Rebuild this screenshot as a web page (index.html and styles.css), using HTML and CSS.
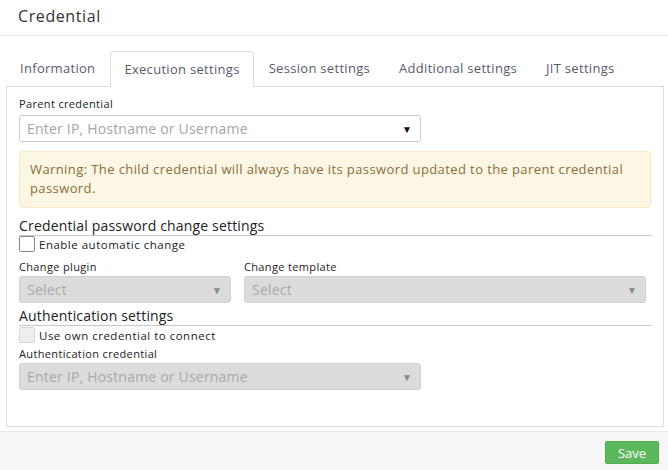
FILE: index.html
```html
<!DOCTYPE html>
<html>
<head>
<meta charset="utf-8">
<link rel="stylesheet" href="styles.css">
</head>
<body>
<div class="dialog">
  <div class="header"><h1 class="title">Credential</h1></div>
  <div class="main">
    <ul class="tabs">
      <li class="tab">Information</li>
      <li class="tab active">Execution settings</li>
      <li class="tab">Session settings</li>
      <li class="tab">Additional settings</li>
      <li class="tab">JIT settings</li>
    </ul>
    <div class="panel">
      <label class="label">Parent credential</label>
      <div class="select">
        <span class="placeholder">Enter IP, Hostname or Username</span>
        <span class="arrow">▼</span>
      </div>
      <div class="warning">Warning: The child credential will always have its password updated to the parent credential password.</div>

      <div class="section-title">Credential password change settings</div>
      <div class="check-row first"><span class="checkbox"></span><span class="check-label">Enable automatic change</span></div>
      <div class="cols">
        <div class="col">
          <label class="label">Change plugin</label>
          <div class="select disabled"><span class="placeholder">Select</span><span class="arrow">▼</span></div>
        </div>
        <div class="col">
          <label class="label">Change template</label>
          <div class="select disabled"><span class="placeholder">Select</span><span class="arrow">▼</span></div>
        </div>
      </div>

      <div class="section-title">Authentication settings</div>
      <div class="check-row"><span class="checkbox disabled"></span><span class="check-label">Use own credential to connect</span></div>
      <label class="label tight">Authentication credential</label>
      <div class="select disabled">
        <span class="placeholder">Enter IP, Hostname or Username</span>
        <span class="arrow">▼</span>
      </div>
    </div>
  </div>
  <div class="footer"><button class="save">Save</button></div>
</div>
</body>
</html>
```

FILE: styles.css
```css
* { box-sizing: border-box; }
html, body { margin: 0; padding: 0; background: #fff; }
body {
  font-family: "Open Sans", "Noto Sans", sans-serif;
  color: #333;
  width: 668px;
  height: 470px;
  overflow: hidden;
}
.dialog { display: flex; flex-direction: column; height: 470px; }
.header {
  height: 36px;
  border-bottom: 1px solid #e8e8e8;
  padding: 0 0 3px 18px;
  display: flex;
  align-items: center;
}
.title { margin: 0; font-size: 16px; font-weight: 500; color: #333; line-height: 1; letter-spacing: 0.6px; }
.main { flex: 1; padding: 14px 4px 0 6px; }
.tabs {
  list-style: none;
  margin: 0;
  padding: 0;
  display: flex;
  height: 36px;
}
.tab {
  padding: 0 13px;
  height: 36px;
  line-height: 35px;
  font-size: 13px;
  letter-spacing: 0.3px;
  color: #5b5a6b;
  border: 1px solid transparent;
  border-bottom: none;
  white-space: nowrap;
}
.tab + .tab { margin-left: 1px; }
.active {
  border-color: #dcdcdc;
  border-radius: 4px 4px 0 0;
  background: #fff;
  position: relative;
  top: 1px;
  height: 36px;
}
.panel {
  border: 1px solid #dcdcdc;
  height: 341px;
  padding: 9px 12px 0 12px;
}
.label {
  display: block;
  font-size: 11px;
  letter-spacing: 0.35px;
  color: #222;
  line-height: 15px;
  margin-bottom: 4px;
}
.select {
  width: 402px;
  height: 27px;
  flex-shrink: 0;
  border: 1px solid #ccc;
  border-radius: 3px;
  display: flex;
  align-items: center;
  justify-content: space-between;
  padding: 0 8px 0 7px;
  background: #fff;
}
.placeholder { font-size: 14px; letter-spacing: 0.2px; color: #a5a5a5; }
.arrow { font-size: 10px; color: #111; }
.select.disabled { background: #dcdcdc; border-color: #cfcfcf; }
.select.disabled .placeholder { color: #a9a9a9; }
.select.disabled .arrow { color: #888; }
.warning {
  margin-top: 9px;
  width: 632px;
  background: #fcf7e4;
  border: 1px solid #f8e8c4;
  border-radius: 4px;
  padding: 8px 10px 9px 10px;
  font-size: 13px;
  letter-spacing: 0.4px;
  line-height: 19px;
  color: #8a6d3b;
}
.section-title {
  margin-top: 9px;
  width: 633px;
  font-size: 14px;
  letter-spacing: 0.17px;
  line-height: 17px;
  color: #222;
  border-bottom: 1px solid #c8c8c8;
  padding-bottom: 1px;
}
.check-row { display: flex; align-items: center; height: 18px; margin-top: 0; }
.check-row.first { margin-top: -1px; }
.checkbox {
  width: 16px;
  height: 16px;
  border: 1px solid #888;
  border-radius: 2px;
  background: #fff;
  margin-right: 4px;
}
.checkbox.disabled { background: #eee; border-color: #d8d8d8; }
.check-label { font-size: 11.5px; letter-spacing: 0.5px; color: #222; }
.cols {
  display: grid;
  grid-template-columns: 212px 402px;
  column-gap: 13px;
  margin-top: 6px;
}
.cols .label { margin-bottom: 2px; }
.cols .select { width: 100%; }
.cols + .section-title { margin-top: 4px; }
.label.tight { margin-top: 2px; margin-bottom: 2px; }
.footer {
  height: 39px;
  margin-top: 3px;
  background: #f7f7f7;
  border-top: 1px solid #e8e8e8;
  display: flex;
  justify-content: flex-end;
  align-items: flex-start;
  padding: 9px 9px 0 0;
}
.save {
  width: 54px;
  height: 23px;
  background: #5cb85c;
  border: 1px solid #4cae4c;
  border-radius: 2px;
  color: #fff;
  font-family: inherit;
  font-size: 13px;
  padding: 0;
}
```
